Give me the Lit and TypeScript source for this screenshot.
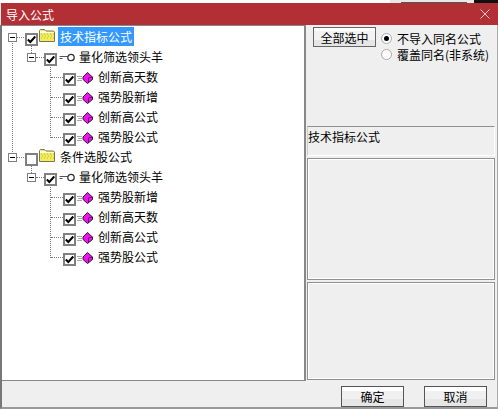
import { LitElement, html, css, svg } from "lit";
import { customElement } from "lit/decorators.js";

type Row = { label: string; level: number; icon: "folder" | "key" | "gem"; checked: boolean; sel?: boolean };
const rows: Row[] = [
  { label: "技术指标公式", level: 0, icon: "folder", checked: true, sel: true },
  { label: "量化筛选领头羊", level: 1, icon: "key", checked: true },
  { label: "创新高天数", level: 2, icon: "gem", checked: true },
  { label: "强势股新增", level: 2, icon: "gem", checked: true },
  { label: "创新高公式", level: 2, icon: "gem", checked: true },
  { label: "强势股公式", level: 2, icon: "gem", checked: true },
  { label: "条件选股公式", level: 0, icon: "folder", checked: false },
  { label: "量化筛选领头羊", level: 1, icon: "key", checked: true },
  { label: "强势股新增", level: 2, icon: "gem", checked: true },
  { label: "创新高天数", level: 2, icon: "gem", checked: true },
  { label: "创新高公式", level: 2, icon: "gem", checked: true },
  { label: "强势股公式", level: 2, icon: "gem", checked: true },
];

const folder = svg`<svg width="16" height="13" viewBox="0 0 16 13"><path d="M.5 12.500V1.500l1-1h4l1 1.500h8l1 1v9.500z" fill="#f4ec5a" stroke="#77775c"/><path d="M1 2.500h6M1 3.500h14" stroke="#fffde0" fill="none"/><path d="M2 5h1M5 5h1M8 5h1M11 5h1M14 5h1M3 7h1M6 7h1M9 7h1M12 7h1M2 9h1M5 9h1M8 9h1M11 9h1M14 9h1" stroke="#b8b040"/></svg>`;
const key = svg`<svg width="16" height="9" viewBox="0 0 16 9"><path d="M.5 3.500h9M.5 5.500h3" stroke="#555" fill="none"/><circle cx="12" cy="4.500" r="3.200" fill="#fff" stroke="#333" stroke-width="1.300"/></svg>`;
const gem = svg`<svg width="16" height="12" viewBox="0 0 16 12"><path d="M0 4.500h5M1 6.500h4M0 8.500h5" stroke="#aaa"/><path d="M10.500.5l5 4.500v2.500l-5 4-4.500-4V5z" fill="#f010f0" stroke="#222"/><path d="M11.500 6l4-1M11.500 6v5" stroke="#600060" fill="none"/></svg>`;
const check = svg`<svg width="9" height="9" viewBox="0 0 9 9"><path d="M.8 4.500l2.500 2.500 5-5.500" fill="none" stroke="#000" stroke-width="2"/></svg>`;

@customElement("app-root")
export class AppRoot extends LitElement {
  static styles = css`
    :host { display: block; width: 498px; height: 409px; background: #efefef; font-family: "Noto Sans CJK SC", "Liberation Sans", sans-serif; font-size: 12px; color: #000; overflow: hidden; position: relative; }
    .peek { height: 3px; display: flex; overflow: hidden; background: #fff; }
    .peek-l { width: 390px; flex: none; }
    .peek-m { width: 84px; flex: none; background: #e8e8e8; padding-left: 11px; box-sizing: border-box; }
    .peek-btn { display: block; width: 66px; height: 2px; border-bottom: 1px solid #555; }
    .peek-r { flex: 1; background: #111; }
    .title { height: 22px; margin-left: 1px; background: #b23035; color: #fff; display: flex; align-items: center; justify-content: space-between; padding: 0 8px 0 5px; font-size: 12px; }
    .title svg { display: block; }
    .body { height: 384px; display: flex; flex-direction: column; border-left: 2px solid #777; border-right: 1px solid #aaa; border-bottom: 2px solid #999; box-sizing: border-box; }
    .main { display: flex; height: 356px; flex: none; }
    .tree { width: 304px; flex: none; box-sizing: border-box; background: #fff; border: 1px solid #888; border-left: none; border-right-width: 2px; }
    .wrap { position: relative; padding-top: 1px; }
    .row { height: 20px; display: flex; position: relative; white-space: nowrap; }
    .row.l0 { padding-left: 23px; }
    .row.l1 { padding-left: 42px; }
    .row.l2 { padding-left: 61px; }
    .cb { width: 13px; height: 13px; box-sizing: border-box; border: 2px solid #808080; background: #fff; display: flex; align-items: center; justify-content: center; flex: none; margin-top: 6px; }
    .cb svg { display: block; }
    .ic { display: flex; flex: none; margin-left: 1px; }
    .i-folder { margin-top: 2px; }
    .i-key { margin-top: 6px; margin-left: 2px; }
    .i-gem { margin-top: 5px; margin-left: 1px; }
    .lbl { line-height: 19px; height: 19px; color: #000; padding: 0 2px; margin-left: 3px; }
    .i-key + .lbl { margin-left: 2px; }
    .lbl.sel { background: #3399ff; color: #fff; }
    .lv { position: absolute; width: 0; border-left: 1px dotted #777; }
    .lh { position: absolute; height: 0; border-top: 1px dotted #777; }
    .exp { position: absolute; width: 9px; height: 9px; background: #fff; border: 1px solid #808080; box-sizing: border-box; display: flex; align-items: center; justify-content: center; }
    .exp::after { content: ""; width: 5px; height: 1px; background: #000; }
    .side { flex: 1; display: flex; flex-direction: column; padding: 0 2px 0 1px; min-width: 0; }
    .opts { height: 101px; display: flex; gap: 5px; padding: 2px 0 0 6px; box-sizing: border-box; flex: none; }
    .btn { width: 63px; height: 20px; box-sizing: border-box; border: 1px solid #666; background: linear-gradient(#fff 0 3px, #f3f3f3 3px 12px, #e6e6e6 12px); display: flex; align-items: center; justify-content: center; }
    .radios { display: flex; flex-direction: column; padding-top: 3px; }
    .radio { display: flex; align-items: center; height: 16px; gap: 5px; white-space: nowrap; }
    .dot { width: 11px; height: 11px; border-radius: 50%; background: #fff; border: 1px solid #aaa; box-sizing: border-box; display: flex; align-items: center; justify-content: center; }
    .dot.on::after { content: ""; width: 5px; height: 5px; border-radius: 50%; background: #000; }
    .box { box-sizing: border-box; border: 1px solid #909090; box-shadow: inset 0 0 0 1px #fff; flex: none; background: #efefef; }
    .b1 { height: 30px; margin-bottom: 2px; line-height: 20px; border-top: 1px solid #909090; border-bottom: 1px solid #fff; border-left: 1px solid #ccc; border-right: 1px solid #fff; box-shadow: none; }
    .b2 { height: 122px; margin-bottom: 2px; }
    .b3 { height: 98px; }
    .foot { flex: 1; display: flex; justify-content: flex-end; gap: 20px; padding: 5px 10px 0 0; }
    .fbtn { width: 63px; height: 21px; box-sizing: border-box; border: 1px solid #555; background: linear-gradient(#fff 0 4px, #f0f0f0 4px 12px, #e6e6e6 12px); display: flex; align-items: center; justify-content: center; }
  `;

  private connectors() {
    return html`
      <span class="lv" style="left:10px;top:11px;height:125px"></span>
      <span class="lh" style="left:11px;top:11px;width:11px"></span>
      <span class="exp" style="left:6px;top:7px"></span>
      <span class="lh" style="left:11px;top:131px;width:11px"></span>
      <span class="exp" style="left:6px;top:127px"></span>
      <span class="lv" style="left:29px;top:19px;height:14px"></span>
      <span class="lh" style="left:34px;top:31px;width:8px"></span>
      <span class="exp" style="left:25px;top:27px"></span>
      <span class="lv" style="left:48px;top:39px;height:73px"></span>
      <span class="lh" style="left:49px;top:51px;width:12px"></span>
      <span class="lh" style="left:49px;top:71px;width:12px"></span>
      <span class="lh" style="left:49px;top:91px;width:12px"></span>
      <span class="lh" style="left:49px;top:111px;width:12px"></span>
      <span class="lv" style="left:29px;top:139px;height:14px"></span>
      <span class="lh" style="left:34px;top:151px;width:8px"></span>
      <span class="exp" style="left:25px;top:147px"></span>
      <span class="lv" style="left:48px;top:159px;height:73px"></span>
      <span class="lh" style="left:49px;top:171px;width:12px"></span>
      <span class="lh" style="left:49px;top:191px;width:12px"></span>
      <span class="lh" style="left:49px;top:211px;width:12px"></span>
      <span class="lh" style="left:49px;top:231px;width:12px"></span>
    `;
  }

  render() {
    return html`
      <div class="peek">
        <div class="peek-l"></div>
        <div class="peek-m"><span class="peek-btn"></span></div>
        <div class="peek-r"></div>
      </div>
      <div class="title">
        <span>导入公式</span>
        <svg width="10" height="10" viewBox="0 0 10 10"><path d="M.5.5l9 9M9.500.5l-9 9" stroke="#e8c8c8"/></svg>
      </div>
      <div class="body">
        <div class="main">
          <div class="tree">
            <div class="wrap">
              ${this.connectors()}
              ${rows.map(r => html`
                <div class="row l${r.level}">
                  <span class="cb">${r.checked ? check : ""}</span>
                  <span class="ic i-${r.icon}">${r.icon === "folder" ? folder : r.icon === "key" ? key : gem}</span>
                  <span class="lbl ${r.sel ? "sel" : ""}">${r.label}</span>
                </div>`)}
            </div>
          </div>
          <div class="side">
            <div class="opts">
              <div class="btn">全部选中</div>
              <div class="radios">
                <label class="radio"><span class="dot on"></span>不导入同名公式</label>
                <label class="radio"><span class="dot"></span>覆盖同名(非系统)</label>
              </div>
            </div>
            <div class="box b1">技术指标公式</div>
            <div class="box b2"></div>
            <div class="box b3"></div>
          </div>
        </div>
        <div class="foot">
          <div class="fbtn">确定</div>
          <div class="fbtn">取消</div>
        </div>
      </div>
    `;
  }
}
